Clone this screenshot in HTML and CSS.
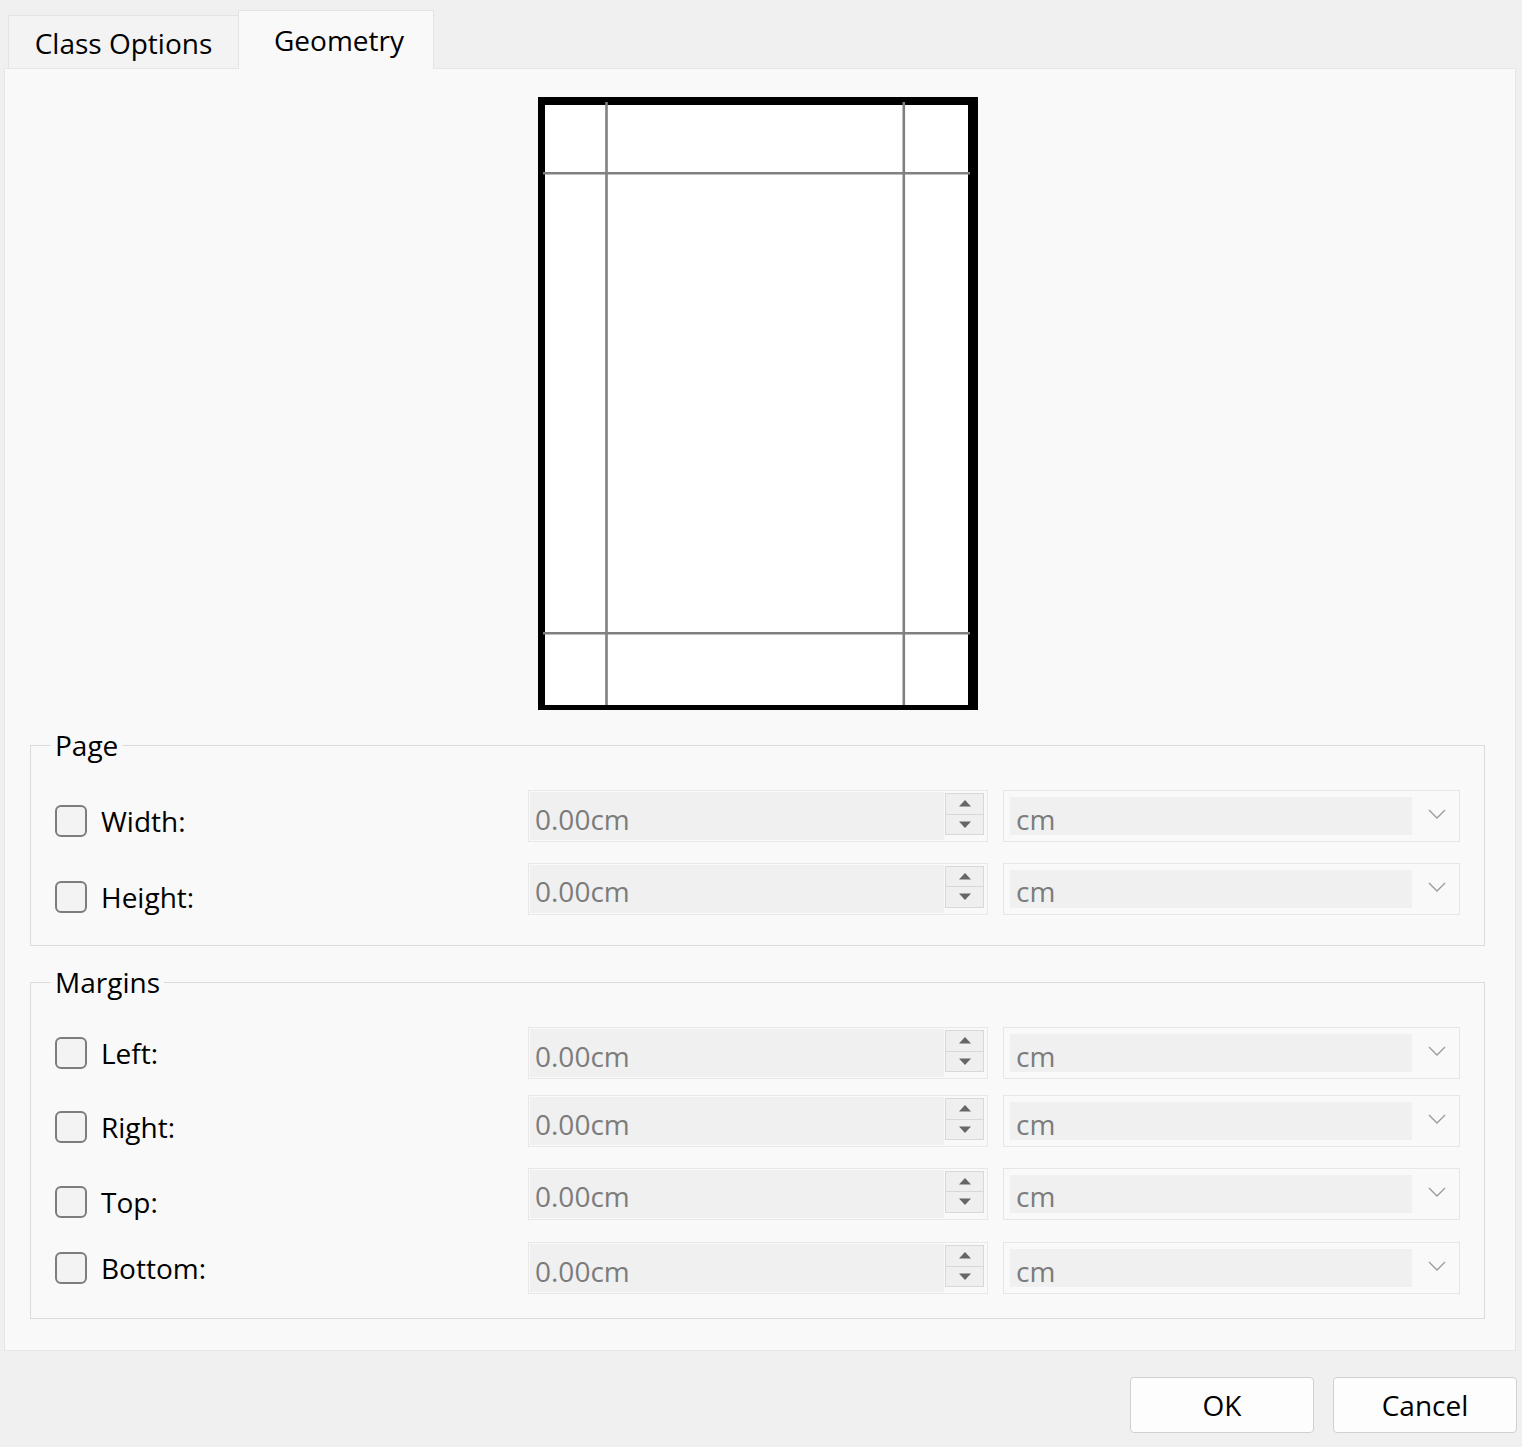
FILE: index.html
```html
<!DOCTYPE html>
<html>
<head>
<meta charset="utf-8">
<link rel="stylesheet" href="styles.css">
</head>
<body>
<div class="dialog">
  <div class="tabs">
    <div class="tab tab-inactive">Class Options</div>
    <div class="tab tab-active">Geometry</div>
  </div>
  <div class="pane">
    <div class="preview-wrap">
      <svg class="preview" width="440" height="613" viewBox="0 0 440 613">
        <rect width="440" height="613" fill="#000"/>
        <rect x="7" y="8" width="423" height="600" fill="#fff"/>
        <g stroke="#808080" stroke-width="2.6">
          <line x1="68.5" y1="5" x2="68.5" y2="608"/>
          <line x1="365.8" y1="5" x2="365.8" y2="608"/>
          <line x1="5" y1="76.3" x2="432" y2="76.3"/>
          <line x1="5" y1="536.3" x2="432" y2="536.3"/>
        </g>
      </svg>
    </div>

    <fieldset class="group group-page">
      <legend>Page</legend>
      <div class="row">
        <label class="check drop-s"><span class="box"></span><span>Width:</span></label>
        <div class="spin"><span class="spin-field">0.00cm</span><span class="spin-btns"><span class="spin-btn"><svg width="12" height="7" viewBox="0 0 12 7"><path d="M6 0 L12 6.5 L0 6.5 Z" fill="#666"/></svg></span><span class="spin-btn"><svg width="12" height="7" viewBox="0 0 12 7"><path d="M0 0.5 L12 0.5 L6 7 Z" fill="#666"/></svg></span></span></div>
        <div class="combo"><span class="combo-field">cm</span><svg class="chev" width="18" height="10" viewBox="0 0 18 10"><path d="M1 1 L9 9 L17 1" fill="none" stroke="#9a9a9a" stroke-width="1.3"/></svg></div>
      </div>
      <div class="row">
        <label class="check drop-l"><span class="box"></span><span>Height:</span></label>
        <div class="spin"><span class="spin-field">0.00cm</span><span class="spin-btns"><span class="spin-btn"><svg width="12" height="7" viewBox="0 0 12 7"><path d="M6 0 L12 6.5 L0 6.5 Z" fill="#666"/></svg></span><span class="spin-btn"><svg width="12" height="7" viewBox="0 0 12 7"><path d="M0 0.5 L12 0.5 L6 7 Z" fill="#666"/></svg></span></span></div>
        <div class="combo"><span class="combo-field">cm</span><svg class="chev" width="18" height="10" viewBox="0 0 18 10"><path d="M1 1 L9 9 L17 1" fill="none" stroke="#9a9a9a" stroke-width="1.3"/></svg></div>
      </div>
    </fieldset>

    <fieldset class="group group-margins">
      <legend>Margins</legend>
      <div class="row">
        <label class="check"><span class="box"></span><span>Left:</span></label>
        <div class="spin"><span class="spin-field">0.00cm</span><span class="spin-btns"><span class="spin-btn"><svg width="12" height="7" viewBox="0 0 12 7"><path d="M6 0 L12 6.5 L0 6.5 Z" fill="#666"/></svg></span><span class="spin-btn"><svg width="12" height="7" viewBox="0 0 12 7"><path d="M0 0.5 L12 0.5 L6 7 Z" fill="#666"/></svg></span></span></div>
        <div class="combo"><span class="combo-field">cm</span><svg class="chev" width="18" height="10" viewBox="0 0 18 10"><path d="M1 1 L9 9 L17 1" fill="none" stroke="#9a9a9a" stroke-width="1.3"/></svg></div>
      </div>
      <div class="row row-tight">
        <label class="check drop-m"><span class="box"></span><span>Right:</span></label>
        <div class="spin"><span class="spin-field">0.00cm</span><span class="spin-btns"><span class="spin-btn"><svg width="12" height="7" viewBox="0 0 12 7"><path d="M6 0 L12 6.5 L0 6.5 Z" fill="#666"/></svg></span><span class="spin-btn"><svg width="12" height="7" viewBox="0 0 12 7"><path d="M0 0.5 L12 0.5 L6 7 Z" fill="#666"/></svg></span></span></div>
        <div class="combo"><span class="combo-field">cm</span><svg class="chev" width="18" height="10" viewBox="0 0 18 10"><path d="M1 1 L9 9 L17 1" fill="none" stroke="#9a9a9a" stroke-width="1.3"/></svg></div>
      </div>
      <div class="row">
        <label class="check drop-l"><span class="box"></span><span>Top:</span></label>
        <div class="spin"><span class="spin-field">0.00cm</span><span class="spin-btns"><span class="spin-btn"><svg width="12" height="7" viewBox="0 0 12 7"><path d="M6 0 L12 6.5 L0 6.5 Z" fill="#666"/></svg></span><span class="spin-btn"><svg width="12" height="7" viewBox="0 0 12 7"><path d="M0 0.5 L12 0.5 L6 7 Z" fill="#666"/></svg></span></span></div>
        <div class="combo"><span class="combo-field">cm</span><svg class="chev" width="18" height="10" viewBox="0 0 18 10"><path d="M1 1 L9 9 L17 1" fill="none" stroke="#9a9a9a" stroke-width="1.3"/></svg></div>
      </div>
      <div class="row row-loose">
        <label class="check"><span class="box"></span><span>Bottom:</span></label>
        <div class="spin"><span class="spin-field">0.00cm</span><span class="spin-btns"><span class="spin-btn"><svg width="12" height="7" viewBox="0 0 12 7"><path d="M6 0 L12 6.5 L0 6.5 Z" fill="#666"/></svg></span><span class="spin-btn"><svg width="12" height="7" viewBox="0 0 12 7"><path d="M0 0.5 L12 0.5 L6 7 Z" fill="#666"/></svg></span></span></div>
        <div class="combo"><span class="combo-field">cm</span><svg class="chev" width="18" height="10" viewBox="0 0 18 10"><path d="M1 1 L9 9 L17 1" fill="none" stroke="#9a9a9a" stroke-width="1.3"/></svg></div>
      </div>
    </fieldset>
  </div>
  <div class="buttons">
    <button class="btn">OK</button>
    <button class="btn">Cancel</button>
  </div>
</div>
</body>
</html>
```
FILE: styles.css
```css
html, body {
  margin: 0;
  padding: 0;
  background: #f0f0f0;
}
body {
  width: 1522px;
  height: 1447px;
  overflow: hidden;
  font-family: "Open Sans", "Noto Sans", sans-serif;
  font-size: 28px;
  color: #000;
}
.dialog {
  padding-top: 10px;
}
.tabs {
  display: flex;
  align-items: flex-end;
  height: 58px;
  margin-left: 8px;
}
.tab {
  box-sizing: border-box;
  display: flex;
  align-items: center;
  justify-content: center;
  border: 1px solid #e3e3e3;
  border-bottom: none;
}
.tab-inactive {
  width: 230px;
  height: 53px;
  background: #f3f3f3;
  border-right: none;
  padding-top: 2px;
}
.tab-active {
  width: 196px;
  height: 59px;
  margin-bottom: -1px;
  background: #f9f9f9;
  position: relative;
  z-index: 1;
  padding-left: 6px;
}
.pane {
  box-sizing: border-box;
  margin: 0 6px 0 4px;
  background: #f9f9f9;
  border: 1px solid #e6e6e6;
  padding: 28px 30px 31px 25px;
}
.preview-wrap {
  display: flex;
  justify-content: center;
  padding-left: 1px;
}
.preview {
  display: block;
}
.group {
  margin: 0;
  border: 1px solid #dcdcdc;
  padding: 29px 24px 31px 24px;
  min-width: 0;
}
.group-page {
  margin-top: 19px;
}
.group-margins {
  margin-top: 20px;
  padding-bottom: 24px;
}
.group legend {
  padding: 0 4px;
  margin-left: -4px;
  line-height: 32px;
  height: 32px;
}
.row {
  display: grid;
  grid-template-columns: 458px 460px 1fr;
  column-gap: 15px;
  align-items: center;
  height: 52px;
}
.row + .row {
  margin-top: 20px;
}
.row.row-tight {
  margin-top: 16px;
}
.row.row-loose {
  margin-top: 23px;
}
.check {
  display: flex;
  align-items: center;
  gap: 14px;
  line-height: 36px;
}
.check.drop-s { margin-top: 10px; }
.check.drop-m { margin-top: 12px; }
.check.drop-l { margin-top: 17px; }
.box {
  box-sizing: border-box;
  width: 32px;
  height: 32px;
  border: 2px solid #7d7d7d;
  border-radius: 6px;
  background: #f3f3f3;
  flex: none;
}
.spin {
  box-sizing: border-box;
  height: 52px;
  border: 1px solid #e8e8e8;
  background: #f9f9f9;
  padding: 1px 3px 1px 1px;
  display: flex;
  align-items: stretch;
}
.spin-field {
  flex: 1;
  background: #f0f0f0;
  color: #7c7c7c;
  padding-left: 5px;
  display: flex;
  align-items: center;
  padding-top: 5px;
}
.spin-btns {
  box-sizing: border-box;
  width: 39px;
  margin: 1px 0 5px 1px;
  border: 1px solid #d8d8d8;
  background: #efefef;
  display: flex;
  flex-direction: column;
}
.spin-btn {
  flex: 1;
  display: flex;
  align-items: center;
  justify-content: center;
}
.spin-btn + .spin-btn {
  border-top: 1px solid #d8d8d8;
}
.combo {
  box-sizing: border-box;
  height: 52px;
  border: 1px solid #e6e6e6;
  background: #f9f9f9;
  padding: 6px 13px 6px 6px;
  display: flex;
  align-items: stretch;
}
.combo-field {
  width: 402px;
  background: #f0f0f0;
  color: #7c7c7c;
  padding-left: 6px;
  box-sizing: border-box;
  display: flex;
  align-items: center;
  padding-top: 5px;
}
.chev {
  margin-left: auto;
  align-self: center;
  margin-top: -4px;
}
.buttons {
  display: flex;
  justify-content: flex-end;
  gap: 19px;
  margin-top: 26px;
  padding-right: 5px;
}
.btn {
  width: 184px;
  height: 56px;
  border: 1px solid #d0d0d0;
  border-radius: 4px;
  background: #fdfdfd;
  font-family: "Open Sans", "Noto Sans", sans-serif;
  font-size: 28px;
  color: #000;
  padding: 0;
}
```
